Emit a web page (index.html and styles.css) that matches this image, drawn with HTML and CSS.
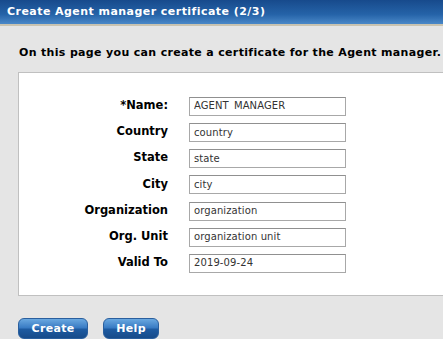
FILE: index.html
```html
<!DOCTYPE html>
<html lang="en">
<head>
    <meta charset="UTF-8">
    <title>Create Agent manager certificate (2/3)</title>
    <link rel="stylesheet" href="styles.css">
</head>
<body>
    <div class="titlebar">Create Agent manager certificate (2/3)</div>
    <div id="content">
        <p class="intro">On this page you can create a certificate for the Agent manager.</p>
        <div class="panel">
            <table class="form">
                <tr>
                    <td class="label">*Name:</td>
                    <td><input type="text" value="AGENT_MANAGER"></td>
                </tr>
                <tr>
                    <td class="label">Country</td>
                    <td><input type="text" value="country"></td>
                </tr>
                <tr>
                    <td class="label">State</td>
                    <td><input type="text" value="state"></td>
                </tr>
                <tr>
                    <td class="label">City</td>
                    <td><input type="text" value="city"></td>
                </tr>
                <tr>
                    <td class="label">Organization</td>
                    <td><input type="text" value="organization"></td>
                </tr>
                <tr>
                    <td class="label">Org. Unit</td>
                    <td><input type="text" value="organization unit"></td>
                </tr>
                <tr>
                    <td class="label">Valid To</td>
                    <td><input type="text" value="2019-09-24"></td>
                </tr>
            </table>
        </div>
        <div class="buttons">
            <button type="submit" class="btn-create">Create</button>
            <button type="button" class="btn-help">Help</button>
        </div>
    </div>
</body>
</html>
```

FILE: styles.css
```css
body {
    font-family: "DejaVu Sans", Verdana, sans-serif;
    background-color: #e5e5e5;
    margin: 0;
    padding: 0;
    overflow: hidden;
}

.titlebar {
    height: 24px;
    line-height: 24px;
    padding-left: 7px;
    color: #fff;
    font-size: 11px;
    font-weight: bold;
    letter-spacing: 0.45px;
    background: linear-gradient(to bottom, #174a8c 0%, #2563a8 60%, #4a88c8 100%);
    border-bottom: 2px solid #c9c3b0;
}

#content {
    padding: 0 0 0 18px;
}

.intro {
    margin: 19px 0 0 1px;
    font-size: 11px;
    font-weight: bold;
    letter-spacing: 0.33px;
    color: #000;
    line-height: 16px;
    white-space: nowrap;
}

.panel {
    margin-top: 11px;
    margin-right: -10px;
    height: 222px;
    background-color: #fff;
    border: 1px solid #c0c0c0;
}

.form {
    border-collapse: collapse;
    margin-top: 19px;
}

.form td {
    padding: 0;
    height: 26.2px;
}

.form .label {
    width: 149px;
    text-align: right;
    padding-right: 21px;
    font-size: 11.5px;
    font-weight: bold;
    color: #000;
}

input[type="text"] {
    width: 157px;
    height: 19px;
    box-sizing: border-box;
    margin: 0;
    padding: 1px 4px 2px;
    border: 1px solid #a8a8a8;
    border-top-color: #909090;
    font-family: "DejaVu Sans", Verdana, sans-serif;
    font-size: 10px;
    line-height: 14px;
    letter-spacing: 0.1px;
    color: #333;
    background-color: #fff;
}

.buttons {
    margin-top: 21px;
}

button {
    height: 21px;
    margin: 0 6px 0 0;
    padding: 0;
    border: 1px solid #2a5f9e;
    border-radius: 6px;
    background: linear-gradient(to bottom, #6aa8e0 0%, #3a7cc4 45%, #1d5aa0 55%, #174b8a 100%);
    color: #fff;
    font-family: "DejaVu Sans", Verdana, sans-serif;
    font-size: 11px;
    font-weight: bold;
    letter-spacing: 0.3px;
    cursor: pointer;
}

.btn-create {
    width: 70px;
}

.btn-help {
    width: 56px;
    margin-left: 4px;
}
```
